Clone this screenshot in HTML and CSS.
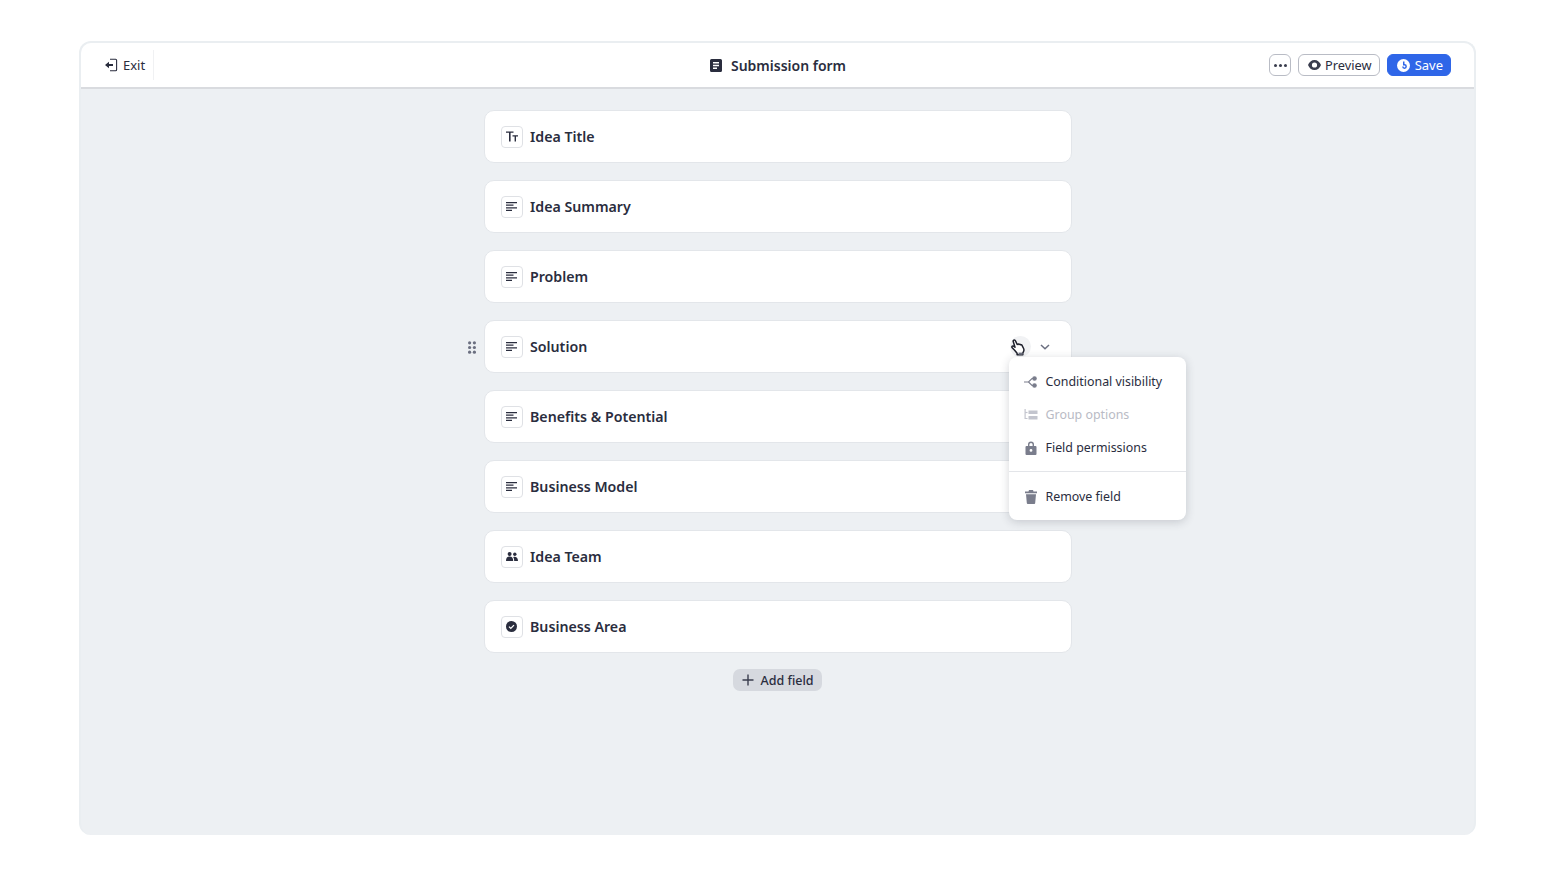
FILE: index.html
```html
<!DOCTYPE html>
<html lang="en">
  <head>
    <meta charset="UTF-8" />
    <title>Submission form</title>
    <link rel="stylesheet" href="styles.css">
  </head>
  <body>
    <div class="frame">
      <div class="topbar">
        <div class="topbar-left">
          <a class="exit">
            <svg width="14" height="14" viewBox="0 0 14 14"><path d="M6 1.200h5.600a1 1 0 0 1 1 1v9.600a1 1 0 0 1-1 1H6" fill="none" stroke="#2a2d3e" stroke-width="1.100"/><path d="M1 7l4-3.200v2.200h4v2H5v2.200z" fill="#2a2d3e"/></svg>
            Exit
          </a>
        </div>
        <div class="title">
          <svg width="12" height="13" viewBox="0 0 12 13"><path fill-rule="evenodd" d="M1.500 0h9A1.500 1.500 0 0 1 12 1.500v10a1.500 1.500 0 0 1-1.500 1.500h-9A1.500 1.500 0 0 1 0 11.500v-10A1.500 1.500 0 0 1 1.500 0zM3 3v1.400h6V3zM3 5.800v1.400h6V5.800zM3 8.600V10h4V8.600z" fill="#2a2d3e"/></svg>
          Submission form
        </div>
        <div class="topbar-right">
          <button class="btn btn-icon">
            <svg width="13" height="3" viewBox="0 0 13 3"><circle cx="1.500" cy="1.500" r="1.500" fill="#3a3d4e"/><circle cx="6.500" cy="1.500" r="1.500" fill="#3a3d4e"/><circle cx="11.500" cy="1.500" r="1.500" fill="#3a3d4e"/></svg>
          </button>
          <button class="btn btn-preview">
            <svg width="13" height="10" viewBox="0 0 13 10"><path fill-rule="evenodd" d="M6.500 0C9.500 0 11.800 2 13 5c-1.200 3-3.500 5-6.500 5S1.200 8 0 5c1.200-3 3.500-5 6.500-5zm0 2.400a2.600 2.600 0 1 0 0 5.200 2.600 2.600 0 0 0 0-5.200z" fill="#3a3d4e"/></svg>
            Preview
          </button>
          <button class="btn btn-save">
            <svg width="13" height="13" viewBox="0 0 13 13"><circle cx="6.500" cy="6.500" r="6.500" fill="#fff"/><path d="M6 2.500h1.500v2.600a2.400 2.400 0 1 1-2.400 2.400h1.500a.9.900 0 1 0 .9-.9H6z" fill="#2f66e8"/></svg>
            Save
          </button>
        </div>
      </div>

      <div class="content">
        <div class="fields">
          <div class="field">
            <span class="field-icon"><svg width="12" height="11" viewBox="0 0 12 11"><path d="M0 .5h7.500v1.300H4.600v8.700H3V1.800H0zM6.500 4.200H12v1.200h-2v5.100H8.600V5.400H6.500z" fill="#2a2d3e"/></svg></span>
            Idea Title
          </div>
          <div class="field">
            <span class="field-icon"><svg class="lines" viewBox="0 0 11 9"><path d="M0 0h11v1.200H0zM0 2.600h7.500v1.200H0zM0 5.200h11v1.200H0zM0 7.800h6v1.200H0z" fill="#2a2d3e"/></svg></span>
            Idea Summary
          </div>
          <div class="field">
            <span class="field-icon"><svg class="lines" viewBox="0 0 11 9"><path d="M0 0h11v1.200H0zM0 2.600h7.500v1.200H0zM0 5.200h11v1.200H0zM0 7.800h6v1.200H0z" fill="#2a2d3e"/></svg></span>
            Problem
          </div>
          <div class="field">
            <svg class="drag" width="8" height="13" viewBox="0 0 8 13"><g fill="#6b6f80"><circle cx="1.600" cy="1.800" r="1.600"/><circle cx="6.400" cy="1.800" r="1.600"/><circle cx="1.600" cy="6.500" r="1.600"/><circle cx="6.400" cy="6.500" r="1.600"/><circle cx="1.600" cy="11.200" r="1.600"/><circle cx="6.400" cy="11.200" r="1.600"/></g></svg>
            <span class="field-icon"><svg class="lines" viewBox="0 0 11 9"><path d="M0 0h11v1.200H0zM0 2.600h7.500v1.200H0zM0 5.200h11v1.200H0zM0 7.800h6v1.200H0z" fill="#2a2d3e"/></svg></span>
            Solution
            <div class="field-actions">
              <span class="action-hover">
                <svg class="hand" width="15" height="18" viewBox="0 0 15 18"><path d="M2.800 1.200c.7-.4 1.400 0 1.700.7l1.700 3.600.3-.2c.5-.5 1.200-.3 1.500.2.500-.4 1.200-.2 1.500.3.500-.3 1.100-.1 1.400.4l1.700 3.300c.5 1.100.4 2.300-.2 3.300l-.6 1v2H6.100v-1.500L3.400 11 1.200 8.700c-.5-.5-.4-1.200.1-1.500.5-.3 1.200-.2 1.700.2l1 .8L2.300 2.700c-.3-.6 0-1.200.5-1.500z" fill="#fff" stroke="#1d1f2b" stroke-width="1.500" stroke-linejoin="round"/><path d="M7.500 13.600h4.200v2.200H7.500z" fill="#6f7280"/></svg>
              </span>
              <svg width="10" height="6" viewBox="0 0 10 6"><path d="M1 1l4 3.800L9 1" fill="none" stroke="#6b6f80" stroke-width="1.500"/></svg>
            </div>
            <div class="menu">
              <div class="menu-group">
                <div class="menu-item">
                  <svg width="14" height="12" viewBox="0 0 14 12"><path d="M0 6h4.500L8 2.500h2M4.500 6L8 9.500h2" fill="none" stroke="#7a7d8c" stroke-width="1.100"/><circle cx="10.500" cy="2.500" r="2.300" fill="#7a7d8c"/><circle cx="10.500" cy="9.500" r="2.300" fill="#7a7d8c"/></svg>
                  Conditional visibility
                </div>
                <div class="menu-item disabled">
                  <svg width="13" height="12" viewBox="0 0 13 12"><path d="M.6 0v9.500H3" fill="none" stroke="#c3c5ce" stroke-width="1.200"/><path d="M.6 3.500H3" stroke="#c3c5ce" stroke-width="1.200"/><path d="M4 1.500h9v3.500H4zM4 7h9v3.500H4z" fill="#c3c5ce"/></svg>
                  Group options
                </div>
                <div class="menu-item">
                  <svg width="12" height="14" viewBox="0 0 12 14"><path fill-rule="evenodd" d="M3 5V3.500a3 3 0 0 1 6 0V5h1.500a1 1 0 0 1 1 1v7a1 1 0 0 1-1 1h-9a1 1 0 0 1-1-1V6a1 1 0 0 1 1-1zm1.400 0h3.200V3.500a1.600 1.600 0 0 0-3.200 0zM6 8a1.400 1.400 0 1 0 0 2.800A1.400 1.400 0 0 0 6 8z" fill="#7a7d8c"/></svg>
                  Field permissions
                </div>
              </div>
              <div class="menu-group">
                <div class="menu-item">
                  <svg width="13" height="14" viewBox="0 0 13 14"><path d="M4.500 0h4l.5 1.500h3.500v1.700H.5V1.500H4zM1.500 4.300h10L10.700 13a1 1 0 0 1-1 1H3.300a1 1 0 0 1-1-1z" fill="#7a7d8c"/></svg>
                  Remove field
                </div>
              </div>
            </div>
          </div>
          <div class="field">
            <span class="field-icon"><svg class="lines" viewBox="0 0 11 9"><path d="M0 0h11v1.200H0zM0 2.600h7.500v1.200H0zM0 5.200h11v1.200H0zM0 7.800h6v1.200H0z" fill="#2a2d3e"/></svg></span>
            Benefits &amp; Potential
          </div>
          <div class="field">
            <span class="field-icon"><svg class="lines" viewBox="0 0 11 9"><path d="M0 0h11v1.200H0zM0 2.600h7.500v1.200H0zM0 5.200h11v1.200H0zM0 7.800h6v1.200H0z" fill="#2a2d3e"/></svg></span>
            Business Model
          </div>
          <div class="field">
            <span class="field-icon"><svg width="12" height="9" viewBox="0 0 12 9"><circle cx="3.600" cy="2" r="2" fill="#2a2d3e"/><circle cx="8.800" cy="2.300" r="1.700" fill="#2a2d3e"/><path d="M0 9c0-3 1.300-4.400 3.600-4.400S7.200 6 7.200 9zM8.200 9c0-1.700-.3-3-1-3.800 1.800-.8 4.800-.4 4.800 3.800z" fill="#2a2d3e"/></svg></span>
            Idea Team
          </div>
          <div class="field">
            <span class="field-icon"><svg width="11" height="11" viewBox="0 0 11 11"><circle cx="5.500" cy="5.500" r="5.500" fill="#2a2d3e"/><path d="M3 5.600l1.800 1.800L8 4.100" fill="none" stroke="#fff" stroke-width="1.300"/></svg></span>
            Business Area
          </div>
        </div>
        <button class="add-field">
          <svg width="12" height="12" viewBox="0 0 12 12"><path d="M6 .5v11M.5 6h11" stroke="#3a3d4e" stroke-width="1.400"/></svg>
          Add field
        </button>
      </div>
    </div>
  </body>
</html>
```

FILE: styles.css
```css
* {
  box-sizing: border-box;
}
body {
  font-family: "Noto Sans", Arial, sans-serif;
  margin: 0;
  padding: 41px 80px 0 79px;
  background-color: #fff;
  color: #2a2d3e;
}
button {
  font-family: inherit;
  cursor: pointer;
}

.frame {
  width: 1397px;
  height: 794px;
  background-color: #edf0f3;
  border: 2px solid #eaeef1;
  border-bottom: none;
  border-radius: 12px;
  overflow: hidden;
}

.topbar {
  height: 46px;
  display: grid;
  grid-template-columns: 1fr auto 1fr;
  align-items: center;
  background-color: #fff;
  border-bottom: 2px solid #d9dbdf;
}
.topbar-left {
  display: flex;
  align-items: center;
  height: 30px;
}
.exit {
  display: flex;
  align-items: center;
  gap: 5px;
  height: 100%;
  padding: 0 8px 0 23px;
  font-size: 13px;
  border-right: 1px solid #f0f1f3;
}
.title {
  display: flex;
  align-items: center;
  gap: 9px;
  padding-left: 1px;
  font-size: 14px;
  font-weight: 600;
}
.topbar-right {
  display: flex;
  justify-content: flex-end;
  gap: 7px;
  padding-right: 23px;
}
.btn {
  display: flex;
  align-items: center;
  gap: 5px;
  height: 22px;
  padding: 0 7px;
  font-size: 13px;
  color: #2a2d3e;
  background-color: #fff;
  border: 1px solid #b9bcc5;
  border-radius: 6px;
}
.btn-icon {
  width: 22px;
  padding: 0;
  justify-content: center;
}
.btn-preview {
  gap: 4px;
  padding: 0 7px 0 9px;
  font-size: 12.800px;
}
.btn-save {
  padding: 0 7px 0 9px;
  color: #fff;
  background-color: #2f66e8;
  border-color: #2f66e8;
}

.content {
  display: flex;
  flex-direction: column;
  align-items: center;
  padding-top: 21px;
}
.fields {
  width: 588px;
  display: flex;
  flex-direction: column;
  gap: 17px;
}
.field {
  position: relative;
  display: flex;
  align-items: center;
  gap: 7.500px;
  height: 53px;
  padding: 0 16px;
  font-size: 14.200px;
  font-weight: 600;
  background-color: #fff;
  border: 1px solid #e3e6ea;
  border-radius: 10px;
}
.field-icon {
  display: flex;
  align-items: center;
  justify-content: center;
  width: 22px;
  height: 22px;
  background-color: #fff;
  border: 1px solid #dfe1e5;
  border-radius: 4px;
}
.lines {
  width: 11px;
  height: 9px;
}
.drag {
  position: absolute;
  left: -17px;
  top: 20px;
}
.field-actions {
  margin-left: auto;
  display: flex;
  align-items: center;
  gap: 9px;
  padding-right: 5px;
}
.action-hover {
  position: relative;
  display: block;
  width: 21px;
  height: 21px;
  background-color: #f1f2f4;
  border-radius: 50%;
}
.hand {
  position: absolute;
  left: 1px;
  top: 3px;
}

.menu {
  position: absolute;
  left: 524px;
  top: 36px;
  z-index: 2;
  width: 177px;
  height: 163px;
  background-color: #fff;
  border-radius: 8px;
  box-shadow: 0 2px 10px rgba(40, 45, 62, 0.2);
  font-size: 12.400px;
  font-weight: 400;
}
.menu-group {
  padding: 8px 0 7px;
}
.menu-group + .menu-group {
  border-top: 1px solid #e3e5e9;
}
.menu-item {
  display: flex;
  align-items: center;
  gap: 8px;
  height: 33px;
  padding: 0 15px;
}
.menu-item svg {
  flex: none;
  width: 14px;
}
.menu-item.disabled {
  color: #b9bbc5;
}

.add-field {
  display: flex;
  align-items: center;
  gap: 6px;
  height: 22px;
  margin-top: 16px;
  padding: 0 8px 0 9px;
  font-size: 12.500px;
  font-weight: 500;
  color: #2a2d3e;
  background-color: #d6d9df;
  border: none;
  border-radius: 7px;
}
```
